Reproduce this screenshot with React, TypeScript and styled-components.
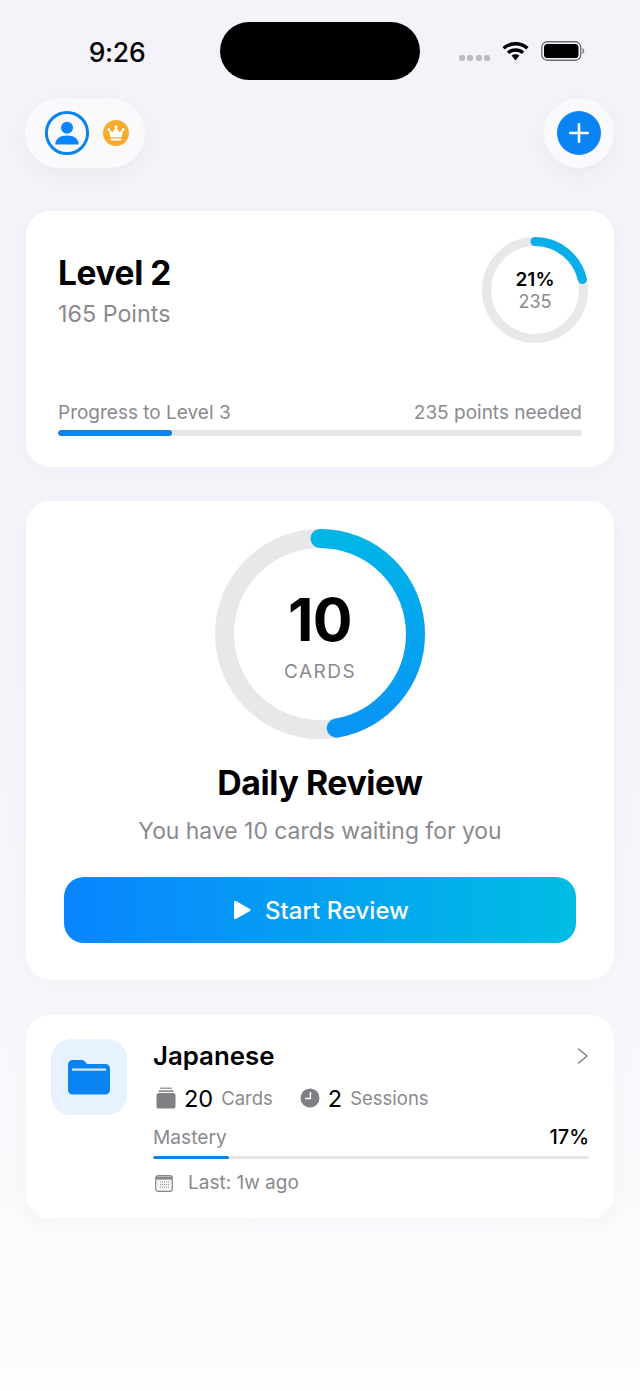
import React from "react";
import styled, { createGlobalStyle } from "styled-components";

const GlobalStyle = createGlobalStyle`
  html, body {
    margin: 0;
    padding: 0;
    background: #f4f4fa;
  }
  * {
    box-sizing: border-box;
  }
`

type RingProps = {
  size: number
  stroke: number
  value: number
  id: string
  from: string
  to: string
}

// the arc is rotated -90deg, so the gradient runs along local x (size = top of the ring)
const ProgressRing = ({ size, stroke, value, id, from, to }: RingProps) => {
  const r = (size - stroke) / 2
  const c = 2 * Math.PI * r
  return (
    <svg width={size} height={size} viewBox={`0 0 ${size} ${size}`}>
      <defs>
        <linearGradient id={id} x1={size} y1="0" x2="0" y2="0" gradientUnits="userSpaceOnUse">
          <stop offset="0" stopColor={from} />
          <stop offset="1" stopColor={to} />
        </linearGradient>
      </defs>
      <circle cx={size / 2} cy={size / 2} r={r} fill="none" stroke="#e8e8ea" strokeWidth={stroke} />
      <circle
        cx={size / 2}
        cy={size / 2}
        r={r}
        fill="none"
        stroke={`url(#${id})`}
        strokeWidth={stroke}
        strokeLinecap="round"
        strokeDasharray={`${c * value} ${c}`}
        transform={`rotate(-90 ${size / 2} ${size / 2})`}
      />
    </svg>
  )
}

const WifiIcon = () => (
  <svg width="27" height="20" viewBox="0 0 27 20">
    <g fill="none" stroke="#000" strokeWidth="3.4">
      <path d="M1.6 7.2C8.2 1.2 18.8 1.2 25.4 7.2" />
      <path d="M6 11.8C10.2 8 16.8 8 21 11.8" />
    </g>
    <path d="M9.6 14.6C11.8 12.9 15.2 12.9 17.4 14.6L13.5 19.4Z" fill="#000" />
  </svg>
)

const BatteryIcon = () => (
  <svg width="44" height="20" viewBox="0 0 44 20">
    <rect x="0.75" y="0.75" width="39" height="18.5" rx="5.5" fill="none" stroke="#6a6a6e" strokeWidth="1.3" />
    <rect x="3" y="3" width="34.5" height="14" rx="3.6" fill="#000" />
    <path d="M41.3 7v6c1.2-.4 2-1.6 2-3s-.8-2.6-2-3Z" fill="#8a8a8e" />
  </svg>
)

const UserIcon = () => (
  <svg width="46" height="46" viewBox="0 0 46 46">
    <circle cx="23" cy="23" r="20.6" fill="none" stroke="#0a84e8" strokeWidth="3" />
    <circle cx="23" cy="17.8" r="6" fill="#0a84ff" />
    <path d="M11.2 34.5C11.6 28.4 16 25.6 23 25.6S34.4 28.4 34.8 34.5Z" fill="#0a84ff" />
  </svg>
)

const CrownIcon = () => (
  <svg width="28" height="28" viewBox="0 0 28 28">
    <circle cx="14" cy="14" r="13" fill="#f8ab2c" />
    <path d="M7.6 11.6L10.8 14.2 14 9.4 17.2 14.2 20.4 11.6 19.2 17.6H8.8Z" fill="#fff" stroke="#fff" strokeWidth="1.2" strokeLinejoin="round" />
    <circle cx="6.8" cy="10.6" r="1.5" fill="#fff" />
    <circle cx="14" cy="7.8" r="1.5" fill="#fff" />
    <circle cx="21.2" cy="10.6" r="1.5" fill="#fff" />
    <rect x="8.4" y="19.4" width="11.2" height="2" rx="1" fill="#fff" />
  </svg>
)

const PlusIcon = () => (
  <svg width="22" height="22" viewBox="0 0 22 22">
    <path d="M11 2.2V19.8M2.2 11H19.8" stroke="#fff" strokeWidth="2.6" strokeLinecap="round" />
  </svg>
)

const PlayIcon = () => (
  <svg width="18" height="20" viewBox="0 0 18 20">
    <path d="M1 2.2C1 1.2 2 .6 2.9 1.1L17 9c.8.5.8 1.6 0 2L2.9 18.9C2 19.4 1 18.8 1 17.8Z" fill="#fff" />
  </svg>
)

const FolderIcon = () => (
  <svg width="44" height="36" viewBox="0 0 44 36">
    <path d="M1 6C1 3 3 1 6 1H14.5C16 1 17 1.6 18 2.6L20 5H38C41 5 43 7 43 10V30.5C43 33.5 41 35.5 38 35.5H6C3 35.5 1 33.5 1 30.5Z" fill="#0a84f0" />
    <rect x="5" y="9.5" width="34" height="2.2" fill="#d9ecfd" />
  </svg>
)

const StackIcon = () => (
  <svg width="20" height="22" viewBox="0 0 20 22">
    <rect x="4" y="0.5" width="12" height="1.6" rx="0.8" fill="#9a9a9e" />
    <rect x="2.4" y="3.2" width="15.2" height="1.8" rx="0.9" fill="#8e8e92" />
    <rect x="0.5" y="6" width="19" height="15.5" rx="2.6" fill="#808084" />
  </svg>
)

const ClockIcon = () => (
  <svg width="20" height="20" viewBox="0 0 20 20">
    <circle cx="10" cy="10" r="9.5" fill="#7f7f83" />
    <path d="M10.4 4.4V10.4H5.6" fill="none" stroke="#fff" strokeWidth="1.5" strokeLinecap="round" strokeLinejoin="round" />
  </svg>
)

const CalendarIcon = () => (
  <svg width="18" height="17" viewBox="0 0 18 17">
    <rect x="0.7" y="0.7" width="16.6" height="15.6" rx="2.4" fill="#f4f4f5" stroke="#87878b" strokeWidth="1.2" />
    <path d="M1 1.6H17V4.6H1Z" fill="#87878b" />
    <g fill="#8f8f93">
      {[6.5, 9, 11.5].map((y) =>
        [5, 7, 9, 11, 13].map((x) => <rect key={`${x}-${y}`} x={x} y={y} width="1" height="1" />)
      )}
    </g>
  </svg>
)

const ChevronIcon = () => (
  <svg width="12" height="16" viewBox="0 0 12 16">
    <path d="M1.6 1L10 8 1.6 15" fill="none" stroke="#808084" strokeWidth="1.5" strokeLinecap="round" strokeLinejoin="round" />
  </svg>
)

const App = () => {
  return (
    <Page>
      <GlobalStyle />
      <StatusBar>
        <Time>9:26</Time>
        <Island />
        <StatusIcons>
          <SignalDots>
            {[0, 1, 2, 3].map((i) => (
              <SignalDot key={i} />
            ))}
          </SignalDots>
          <WifiIcon />
          <BatteryIcon />
        </StatusIcons>
      </StatusBar>

      <TopRow>
        <ProfilePill>
          <UserIcon />
          <CrownIcon />
        </ProfilePill>
        <AddButton>
          <AddCircle>
            <PlusIcon />
          </AddCircle>
        </AddButton>
      </TopRow>

      <Cards>
        <LevelCard>
          <LevelHeader>
            <div>
              <LevelTitle>Level 2</LevelTitle>
              <LevelPoints>165 Points</LevelPoints>
            </div>
            <RingWrap>
              <ProgressRing size={106} stroke={9} value={0.215} id="levelRing" from="#0aaee8" to="#0aaee8" />
              <RingCenter>
                <SmallPercent>21%</SmallPercent>
                <SmallRemain>235</SmallRemain>
              </RingCenter>
            </RingWrap>
          </LevelHeader>
          <ProgressBlock>
            <ProgressLabels>
              <span>Progress to Level 3</span>
              <span>235 points needed</span>
            </ProgressLabels>
            <Track height={6}>
              <Fill style={{ width: "21.8%" }} />
            </Track>
          </ProgressBlock>
        </LevelCard>

        <ReviewCard>
          <RingWrap>
            <ProgressRing size={210} stroke={19} value={0.472} id="reviewRing" from="#00b6e6" to="#0a93f7" />
            <RingCenter>
              <CardCount>10</CardCount>
              <CardCountLabel>CARDS</CardCountLabel>
            </RingCenter>
          </RingWrap>
          <ReviewTitle>Daily Review</ReviewTitle>
          <ReviewText>You have 10 cards waiting for you</ReviewText>
          <StartButton>
            <PlayIcon />
            Start Review
          </StartButton>
        </ReviewCard>

        <DeckCard>
          <FolderTile>
            <FolderIcon />
          </FolderTile>
          <DeckBody>
            <DeckTitleRow>
              <DeckTitle>Japanese</DeckTitle>
              <ChevronIcon />
            </DeckTitleRow>
            <StatsRow>
              <Stat>
                <StackIcon />
                <StatNumber>20</StatNumber>
                <StatLabel>Cards</StatLabel>
              </Stat>
              <Stat>
                <ClockIcon />
                <StatNumber>2</StatNumber>
                <StatLabel>Sessions</StatLabel>
              </Stat>
            </StatsRow>
            <MasteryRow>
              <span>Mastery</span>
              <MasteryValue>17%</MasteryValue>
            </MasteryRow>
            <Track height={3}>
              <Fill style={{ width: "17.5%" }} />
            </Track>
            <LastRow>
              <CalendarIcon />
              Last: 1w ago
            </LastRow>
          </DeckBody>
        </DeckCard>
      </Cards>
    </Page>
  )
}

export default App

const Page = styled.div`
  width: 640px;
  height: 1391px;
  overflow: hidden;
  background: linear-gradient(180deg, #f3f3f9 0%, #f5f5fb 60%, #fdfdfe 100%);
  font-family: Inter, "Liberation Sans", sans-serif;
  color: #000;
`
const StatusBar = styled.div`
  display: grid;
  grid-template-columns: 220px 200px 220px;
  height: 98px;
  padding-top: 22px;
`
const Time = styled.div`
  padding-left: 14px;
  text-align: center;
  font-size: 26.5px;
  font-weight: 550;
  line-height: 60px;
  letter-spacing: -0.3px;
`
const Island = styled.div`
  height: 58px;
  border-radius: 29px;
  background: #000;
`
const StatusIcons = styled.div`
  display: flex;
  align-items: center;
  height: 58px;
  padding-left: 39px;
  gap: 12px;
`
const SignalDots = styled.div`
  display: flex;
  gap: 2.4px;
  margin-top: 14px;
`
const SignalDot = styled.div`
  width: 6px;
  height: 6px;
  border-radius: 2px;
  background: #bcbcc2;
`
const TopRow = styled.div`
  display: flex;
  justify-content: space-between;
  height: 70px;
  padding: 0 26px 0 25px;
  margin-bottom: 43px;
`
const ProfilePill = styled.div`
  display: flex;
  align-items: center;
  gap: 12px;
  width: 120px;
  padding-left: 19px;
  border-radius: 35px;
  background: #fafafd;
  box-shadow: 0 8px 24px rgba(60, 60, 90, 0.05);
`
const AddButton = styled.div`
  display: flex;
  align-items: center;
  justify-content: center;
  width: 70px;
  border-radius: 50%;
  background: #fafafd;
  box-shadow: 0 8px 24px rgba(60, 60, 90, 0.05);
`
const AddCircle = styled.div`
  display: flex;
  align-items: center;
  justify-content: center;
  width: 44px;
  height: 44px;
  border-radius: 50%;
  background: #0a84f5;
`
const Cards = styled.div`
  display: flex;
  flex-direction: column;
  gap: 34px;
  padding: 0 26px;
`
const Card = styled.div`
  border-radius: 24px;
  background: #fff;
  box-shadow: 0 4px 20px rgba(60, 60, 90, 0.035);
`
const LevelCard = styled(Card)`
  height: 256px;
  padding: 26px 26px 0 32px;
`
const LevelHeader = styled.div`
  display: flex;
  justify-content: space-between;
`
const LevelTitle = styled.div`
  margin-top: 16px;
  font-size: 33.5px;
  font-weight: 700;
  line-height: 40px;
  letter-spacing: -0.4px;
`
const LevelPoints = styled.div`
  margin-top: 6px;
  font-size: 23.3px;
  line-height: 30px;
  color: #8a8a8e;
`
const RingWrap = styled.div`
  position: relative;
  display: flex;
  flex-shrink: 0;
`
const RingCenter = styled.div`
  position: absolute;
  inset: 0;
  display: flex;
  flex-direction: column;
  align-items: center;
  justify-content: center;
`
const SmallPercent = styled.div`
  font-size: 19px;
  font-weight: 600;
  line-height: 22px;
`
const SmallRemain = styled.div`
  font-size: 18px;
  line-height: 21px;
  color: #8a8a8e;
`
const ProgressBlock = styled.div`
  margin: 58px 6px 0 0;
`
const ProgressLabels = styled.div`
  display: flex;
  justify-content: space-between;
  margin-bottom: 5px;
  font-size: 19px;
  line-height: 24px;
  color: #8a8a8e;
`
const Track = styled.div<{ height: number }>`
  height: ${(p) => p.height}px;
  border-radius: ${(p) => p.height / 2}px;
  background: #e6e6e8;
  overflow: hidden;
`
const Fill = styled.div`
  height: 100%;
  border-radius: inherit;
  background: #0a84e8;
`
const ReviewCard = styled(Card)`
  display: flex;
  flex-direction: column;
  align-items: center;
  padding: 28px 38px 37px;
`
const CardCount = styled.div`
  margin-top: 4px;
  font-size: 59px;
  font-weight: 700;
  line-height: 64px;
  letter-spacing: -0.6px;
`
const CardCountLabel = styled.div`
  margin-top: 8px;
  font-size: 19px;
  line-height: 24px;
  letter-spacing: 1.5px;
  color: #8a8a8e;
`
const ReviewTitle = styled.div`
  margin-top: 24px;
  font-size: 33.8px;
  font-weight: 700;
  line-height: 40px;
  letter-spacing: -0.4px;
`
const ReviewText = styled.div`
  margin-top: 13px;
  font-size: 22.9px;
  line-height: 30px;
  color: #8a8a8e;
`
const StartButton = styled.div`
  display: flex;
  align-items: center;
  justify-content: center;
  gap: 14px;
  width: 100%;
  height: 66px;
  margin-top: 31px;
  padding-left: 2px;
  border-radius: 20px;
  background: linear-gradient(90deg, #0a84ff 0%, #00bde4 100%);
  color: #fff;
  font-size: 24px;
  font-weight: 500;
`
const DeckCard = styled(Card)`
  display: flex;
  gap: 26px;
  margin-top: 1px;
  padding: 24px 25px 23px;
`
const FolderTile = styled.div`
  display: flex;
  align-items: center;
  justify-content: center;
  flex-shrink: 0;
  width: 76px;
  height: 76px;
  border-radius: 20px;
  background: #e6f2fd;
`
const DeckBody = styled.div`
  flex: 1;
`
const DeckTitleRow = styled.div`
  display: flex;
  align-items: center;
  justify-content: space-between;
  margin-top: 1px;
`
const DeckTitle = styled.div`
  font-size: 25.8px;
  font-weight: 600;
  line-height: 32px;
`
const StatsRow = styled.div`
  display: flex;
  gap: 27px;
  margin-top: 13px;
  padding-left: 3px;
`
const Stat = styled.div`
  display: flex;
  align-items: center;
  height: 26px;
`
const StatNumber = styled.span`
  margin-left: 8px;
  font-size: 23.5px;
  font-weight: 400;
`
const StatLabel = styled.span`
  margin-left: 8px;
  font-size: 18.5px;
  color: #8a8a8e;
`
const MasteryRow = styled.div`
  display: flex;
  justify-content: space-between;
  margin: 14px 0 7px;
  font-size: 19.2px;
  line-height: 24px;
  color: #8a8a8e;
`
const MasteryValue = styled.span`
  color: #000;
  font-weight: 500;
  font-size: 20px;
`
const LastRow = styled.div`
  display: flex;
  align-items: center;
  gap: 15px;
  margin-top: 12px;
  padding-left: 2px;
  font-size: 19px;
  line-height: 24px;
  color: #8a8a8e;
`
